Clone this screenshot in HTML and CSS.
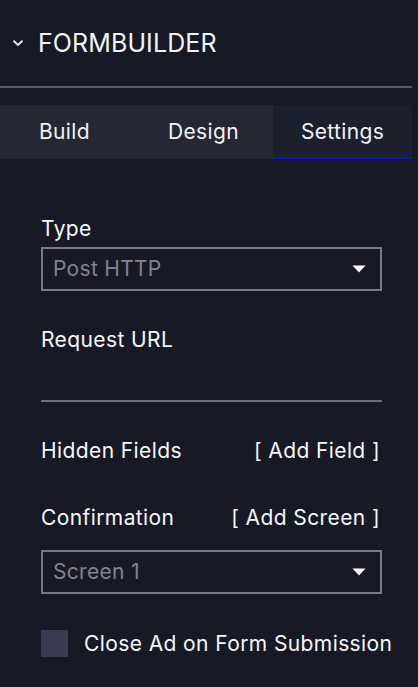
FILE: index.html
```html
<!DOCTYPE html>
<html>
<head>
<meta charset="utf-8">
<link rel="stylesheet" href="styles.css">
</head>
<body>
<div class="panel">
  <div class="header">
    <svg class="chev" width="12" height="8" viewBox="0 0 12 8"><path d="M1.5 1.8 L6 6 L10.5 1.8" fill="none" stroke="#e8e9ee" stroke-width="2"/></svg>
    <span class="title">FORMBUILDER</span>
  </div>
  <div class="divider"></div>
  <div class="tabs">
    <div class="tab">Build</div>
    <div class="tab">Design</div>
    <div class="tab active">Settings</div>
  </div>
  <div class="form">
    <div class="label">Type</div>
    <div class="select select-type">
      <span class="value">Post HTTP</span>
      <svg class="caret" width="14" height="8" viewBox="0 0 14 8"><path d="M0.5 0.5 H13.5 L7 7.5 Z" fill="#ffffff"/></svg>
    </div>
    <div class="label label-url">Request URL</div>
    <div class="input"></div>
    <div class="row row-hidden">
      <span class="label">Hidden Fields</span>
      <span class="link">[ Add Field ]</span>
    </div>
    <div class="row row-confirm">
      <span class="label">Confirmation</span>
      <span class="link">[ Add Screen ]</span>
    </div>
    <div class="select select-screen">
      <span class="value">Screen 1</span>
      <svg class="caret" width="14" height="8" viewBox="0 0 14 8"><path d="M0.5 0.5 H13.5 L7 7.5 Z" fill="#ffffff"/></svg>
    </div>
    <div class="check-row">
      <span class="checkbox"></span>
      <span class="check-label">Close Ad on Form Submission</span>
    </div>
  </div>
</div>
</body>
</html>
```

FILE: styles.css
```css
html, body {
  margin: 0;
  padding: 0;
  background: #171a25;
  height: 100%;
}
body {
  font-family: Inter, "Noto Sans", sans-serif;
  color: #f2f3f6;
  overflow: hidden;
}
.panel {
  width: 418px;
}
.header {
  display: flex;
  align-items: center;
  height: 30px;
  padding: 28px 0 28px 12px;
}
.chev {
  display: block;
  margin-right: 14px;
}
.title {
  font-size: 25px;
  line-height: 30px;
  font-weight: 400;
  letter-spacing: 0.1px;
}
.divider {
  width: 412px;
  height: 2px;
  background: #595c66;
}
.tabs {
  display: grid;
  grid-template-columns: 139px 139px 139px;
  margin: 17px 0 0 -5px;
  width: 417px;
  height: 54px;
  background: #252733;
}
.tab {
  display: flex;
  align-items: center;
  justify-content: center;
  font-size: 21px;
  line-height: 24px;
  letter-spacing: 0.35px;
  color: #f2f3f6;
}
.tab.active {
  background: #1c1f2c;
  box-shadow: inset 0 -2px 0 #0d10df;
}
.form {
  padding: 58px 0 0 41px;
  width: 341px;
}
.label,
.link,
.check-label {
  font-size: 21px;
  line-height: 24px;
  font-weight: 400;
  letter-spacing: 0.4px;
  color: #f6f7fa;
}
.select {
  box-sizing: border-box;
  height: 44px;
  border: 2px solid #777a85;
  display: flex;
  align-items: center;
  justify-content: space-between;
  padding: 0 14px 0 10px;
}
.select-type {
  margin-top: 6px;
}
.value {
  font-size: 21px;
  line-height: 24px;
  letter-spacing: 0.3px;
  color: #81848d;
}
.caret {
  display: block;
}
.label-url {
  margin-top: 37px;
}
.input {
  margin-top: 6px;
  height: 42px;
  border-bottom: 2px solid #6b6e78;
}
.row {
  display: flex;
  justify-content: space-between;
  align-items: center;
  padding-right: 2px;
}
.row-hidden {
  margin-top: 37px;
}
.row-confirm {
  margin-top: 43px;
}
.select-screen {
  margin-top: 20px;
}
.check-row {
  display: flex;
  align-items: center;
  margin-top: 36px;
  width: 380px;
}
.checkbox {
  width: 27px;
  height: 27px;
  background: #3a3b51;
  flex: none;
}
.check-label {
  margin-left: 16px;
  white-space: nowrap;
}
```
